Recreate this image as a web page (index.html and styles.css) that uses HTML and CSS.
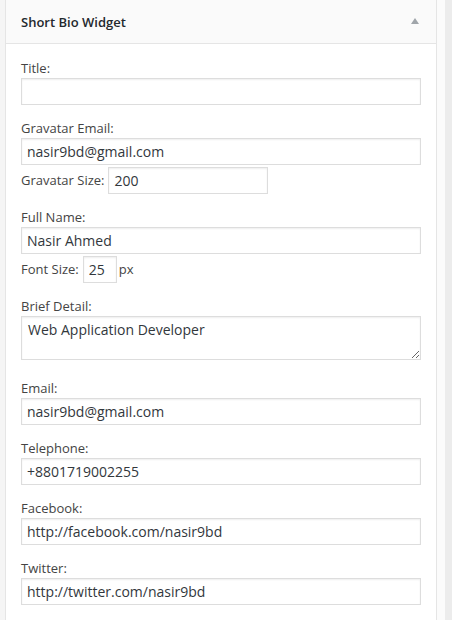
FILE: index.html
```html
<!DOCTYPE html>
<html>
<head>
<meta charset="utf-8">
<link rel="stylesheet" href="styles.css">
</head>
<body>
<div class="page">
  <div class="gutter"></div>
  <div class="widget">
    <div class="widget-top">
      <h3 class="widget-title">Short Bio Widget</h3>
      <span class="toggle"></span>
    </div>
    <div class="widget-inside">
      <div class="field">
        <label class="lbl">Title:</label>
        <input class="inp" type="text" value="">
      </div>
      <div class="field">
        <label class="lbl">Gravatar Email:</label>
        <input class="inp" type="text" value="nasir9bd@gmail.com">
        <div class="row row-size">
          <span class="row-lbl">Gravatar Size:</span>
          <input class="inp inp-size" type="text" value="200">
        </div>
      </div>
      <div class="field">
        <label class="lbl">Full Name:</label>
        <input class="inp" type="text" value="Nasir Ahmed">
        <div class="row row-size">
          <span class="row-lbl">Font Size:</span>
          <input class="inp inp-font" type="text" value="25">
          <span class="row-unit">px</span>
        </div>
      </div>
      <div class="field">
        <label class="lbl">Brief Detail:</label>
        <textarea class="inp txt">Web Application Developer</textarea>
      </div>
      <div class="field">
        <label class="lbl">Email:</label>
        <input class="inp" type="text" value="nasir9bd@gmail.com">
      </div>
      <div class="field">
        <label class="lbl">Telephone:</label>
        <input class="inp" type="text" value="+8801719002255">
      </div>
      <div class="field">
        <label class="lbl">Facebook:</label>
        <input class="inp" type="text" value="http://facebook.com/nasir9bd">
      </div>
      <div class="field">
        <label class="lbl">Twitter:</label>
        <input class="inp" type="text" value="http://twitter.com/nasir9bd">
      </div>
    </div>
  </div>
  <div class="strip"></div>
  <div class="side"></div>
</div>
</body>
</html>
```
FILE: styles.css
```css
html, body {
  margin: 0;
  padding: 0;
  height: 100%;
}
body {
  font-family: "Open Sans", "Liberation Sans", sans-serif;
  font-size: 13px;
  color: #444;
  background: #f5f5f5;
}
.page {
  display: flex;
  min-height: 620px;
}
.gutter {
  width: 5px;
  flex: 0 0 5px;
  background: #f5f5f5;
}
.widget {
  width: 430px;
  flex: 0 0 430px;
  border-left: 1px solid #e5e5e5;
  border-right: 1px solid #e5e5e5;
  background: #fff;
}
.widget-top {
  height: 43px;
  border-bottom: 1px solid #e5e5e5;
  background: #fafafa;
  display: flex;
  align-items: center;
  justify-content: space-between;
  padding: 0 17px 0 15px;
}
.widget-title {
  margin: 0;
  font-size: 13px;
  font-weight: 600;
  color: #23282d;
  line-height: 20px;
  padding-top: 1px;
}
.toggle {
  width: 0;
  height: 0;
  border-left: 4px solid transparent;
  border-right: 4px solid transparent;
  border-bottom: 6px solid #a0a5aa;
  margin-bottom: 1px;
}
.widget-inside {
  padding: 14px 15px 0 15px;
}
.field {
  margin-bottom: 13px;
}
.lbl {
  display: block;
  line-height: 20px;
  height: 20px;
}
.inp {
  display: block;
  box-sizing: border-box;
  width: 400px;
  height: 27px;
  margin: 0;
  padding: 3px 5px;
  border: 1px solid #ddd;
  border-radius: 0;
  box-shadow: inset 0 1px 2px rgba(0, 0, 0, 0.07);
  background: #fff;
  font-family: "Open Sans", "Liberation Sans", sans-serif;
  font-size: 14px;
  color: #32373c;
  outline: none;
}
.row {
  display: flex;
  align-items: center;
  height: 28px;
  margin-top: 1px;
}
.row-lbl {
  margin-right: 4px;
  line-height: 20px;
}
.inp-size {
  width: 160px;
  height: 27px;
}
.inp-font {
  width: 34px;
  height: 27px;
}
.row-unit {
  margin-left: 2px;
  line-height: 20px;
}
.txt {
  height: 44px;
  resize: vertical;
  line-height: 19px;
  padding: 3px 6px;
  margin-bottom: 18px;
  overflow: hidden;
}
.field:has(.txt) {
  margin-bottom: 0;
}
.strip {
  width: 8px;
  flex: 0 0 8px;
  background: #fbfbfb;
}
.side {
  flex: 1;
  background: #ececec;
}
```
